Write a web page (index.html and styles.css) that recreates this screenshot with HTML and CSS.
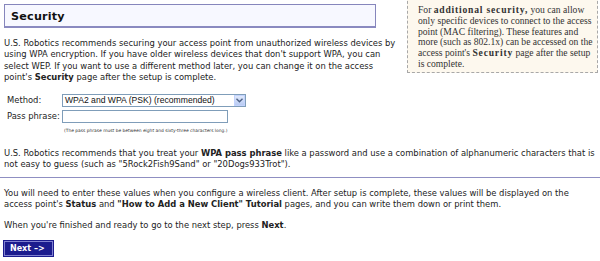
FILE: index.html
```html
<!DOCTYPE html>
<html lang="en">
<head>
  <meta charset="UTF-8" />
  <title>Security</title>
  <link rel="stylesheet" href="styles.css">
</head>
<body>

  <!-- Side tip -->
  <div class="tip">
    For <b>additional security,</b> you can allow only specific devices to connect to the access point (MAC filtering). These features and more (such as 802.1x) can be accessed on the access point's <b>Security</b> page after the setup is complete.
  </div>

  <div class="content">
    <h1 class="title">Security</h1>

    <p class="intro">U.S. Robotics recommends securing your access point from unauthorized wireless devices by using WPA encryption. If you have older wireless devices that don't support WPA, you can select WEP. If you want to use a different method later, you can change it on the access point's <b>Security</b> page after the setup is complete.</p>

    <div class="form">
      <div class="row">
        <label class="label">Method:</label>
        <div class="select">
          <span class="select-text">WPA2 and WPA (PSK) (recommended)</span>
          <span class="select-btn">
            <svg width="7" height="5" viewBox="0 0 7 5"><path d="M0.5 0.8 L3.5 3.8 L6.5 0.8" fill="none" stroke="#4d6185" stroke-width="1.4"/></svg>
          </span>
        </div>
      </div>
      <div class="row">
        <label class="label">Pass phrase:</label>
        <input class="input" type="text">
      </div>
      <div class="note">(The pass phrase must be between eight and sixty-three characters long.)</div>
    </div>

    <p class="advice">U.S. Robotics recommends that you treat your <b>WPA pass phrase</b> like a password and use a combination of alphanumeric characters that is not easy to guess (such as "5Rock2Fish9Sand" or "20Dogs933Trot").</p>
  </div>

  <hr class="rule">

  <div class="content">
    <p class="after-rule">You will need to enter these values when you configure a wireless client. After setup is complete, these values will be displayed on the access point's <b>Status</b> and <b>"How to Add a New Client" Tutorial</b> pages, and you can write them down or print them.</p>

    <p class="finish">When you're finished and ready to go to the next step, press <b>Next</b>.</p>

    <button class="next">Next &ndash;&gt;</button>
  </div>

</body>
</html>
```

FILE: styles.css
```css
* {
  margin: 0;
  padding: 0;
  box-sizing: border-box;
}

body {
  font-family: 'DejaVu Sans', Verdana, sans-serif;
  font-size: 8.4px;
  line-height: 11.3px;
  color: #222;
  background: #fff;
  width: 600px;
  height: 261px;
  overflow: hidden;
}

b {
  font-weight: bold;
}

.content {
  padding: 0 4px;
}

.tip {
  float: right;
  width: 191px;
  margin: -4px 2px 0 6px;
  padding: 8px 3px 2px 10px;
  background-color: #fdf8ee;
  border: 1px dashed #a8a8a8;
  font-family: 'Liberation Serif', Georgia, serif;
  font-size: 9.6px;
  line-height: 10.8px;
  color: #333;
}

.tip b {
  letter-spacing: 0.8px;
}

.title {
  width: 372px;
  height: 24px;
  margin-top: 4px;
  padding: 5px 6px 0;
  background-color: #f7f8ff;
  border: 1px solid #8686bc;
  border-bottom: 2px solid #8a8ac0;
  font-size: 11.2px;
  font-weight: bold;
  line-height: 14px;
  color: #111;
  letter-spacing: 0.2px;
}

.intro {
  margin-top: 10px;
}

.form {
  margin-top: 9px;
  padding-left: 3px;
}

.row {
  display: flex;
  align-items: center;
  height: 16px;
}

.label {
  width: 55px;
}

.select {
  display: flex;
  align-items: center;
  width: 184px;
  height: 13px;
  border: 1px solid #7f9db9;
  background: #fff;
  font-family: 'Liberation Sans', Arial, sans-serif;
  font-size: 8.6px;
  line-height: 11px;
  color: #111;
  white-space: nowrap;
}

.select-text {
  flex: 1;
  padding-left: 2px;
}

.select-btn {
  display: flex;
  align-items: center;
  justify-content: center;
  width: 11px;
  height: 11px;
  background: linear-gradient(#dfe8fb, #b9cbf3);
  border: 1px solid #c3d3fd;
}

.input {
  width: 166px;
  height: 13px;
  border: 1px solid #7f9db9;
  background: #fff;
}

.note {
  margin: 3px 0 0 57px;
  font-size: 4.4px;
  line-height: 8px;
  color: #333;
}

.advice {
  margin-top: 13px;
}

.rule {
  clear: both;
  margin-top: 6px;
  border: none;
  border-top: 1px solid #8f8fc2;
  height: 0;
}

.after-rule {
  margin-top: 10px;
}

.finish {
  margin-top: 10px;
}

.next {
  display: block;
  margin-top: 9px;
  width: 49px;
  height: 15px;
  background-color: #1c1c8e;
  border: 1px solid #8080d0;
  outline: 1px solid #1c1c8e;
  color: #fff;
  font-family: 'DejaVu Sans', Verdana, sans-serif;
  font-size: 8px;
  font-weight: bold;
  text-align: left;
  padding-left: 5px;
}
```
